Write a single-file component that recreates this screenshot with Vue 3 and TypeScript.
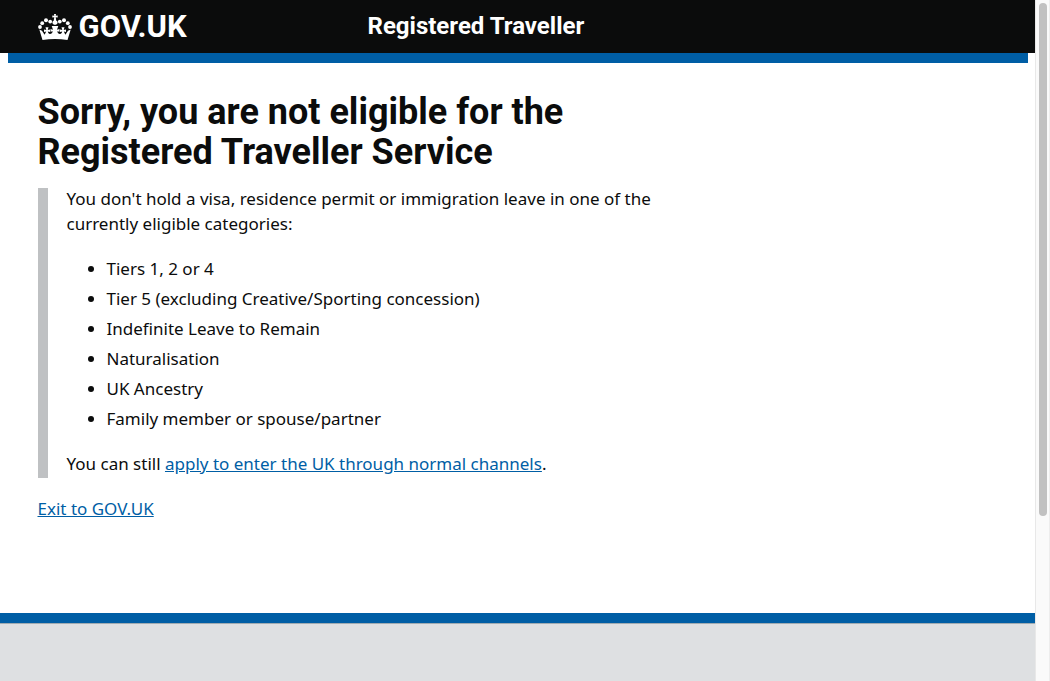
<script setup lang="ts">
const categories: string[] = [
  'Tiers 1, 2 or 4',
  'Tier 5 (excluding Creative/Sporting concession)',
  'Indefinite Leave to Remain',
  'Naturalisation',
  'UK Ancestry',
  'Family member or spouse/partner',
]
</script>

<template>
  <div class="screen">
    <div class="page">
      <header class="header">
        <div class="header-inner">
          <a class="logo" href="#" aria-label="GOV.UK">
            <svg class="crown" viewBox="1 1 34 26" aria-hidden="true">
              <g fill="#fff">
                <circle cx="3" cy="14" r="1.9" />
                <circle cx="5.2" cy="10.2" r="1.9" />
                <circle cx="9" cy="7.3" r="2" />
                <circle cx="13.2" cy="8.6" r="1.9" />
                <circle cx="22.8" cy="8.6" r="1.9" />
                <circle cx="27" cy="7.3" r="2" />
                <circle cx="30.8" cy="10.2" r="1.9" />
                <circle cx="33" cy="14" r="1.9" />
                <path d="M17 1h2l-.3 1.700 2-.3v2.200l-2-.3.6 3.400c.8.3 1.300 1 1.300 1.900 0 1-.7 1.800-1.600 2.200h-2c-.9-.4-1.600-1.200-1.600-2.200 0-.9.5-1.600 1.300-1.900l.6-3.400-2 .3V2.400l2 .3z" />
                <path d="M2.300 16.500 5 17.800l2.600 4 1.600-3.300-2.200.5v-2.600l2.300.5-.8-2.600h3l-.8 2.600 2.300-.5V19l-2.200-.5c.3 1.400 1 2.500 2.200 2.500 1.500 0 2.400-1 2.700-2.700l-2.200.4v-2.600l2.500.6-1.300-3.700h6.600L20 16.700l2.500-.6v2.600l-2.200-.4c.3 1.700 1.200 2.700 2.700 2.700 1.200 0 1.900-1.100 2.200-2.500L23 19v-2.600l2.300.5-.8-2.600h3l-.8 2.600 2.300-.5V19l-2.200-.5 1.600 3.300 2.600-4 2.700-1.300L30.500 27C22.500 25.700 13.500 25.700 5.500 27z" />
              </g>
            </svg>
            <span>GOV.UK</span>
          </a>
          <a class="service" href="#">Registered Traveller</a>
        </div>
      </header>
      <div class="accent"></div>

      <main class="content">
        <h1>Sorry, you are not eligible for the Registered Traveller Service</h1>
        <div class="panel">
          <p class="lead">You don't hold a visa, residence permit or immigration leave in one of the currently eligible categories:</p>
          <ul>
            <li v-for="category in categories" :key="category">{{ category }}</li>
          </ul>
          <p>You can still <a href="#">apply to enter the UK through normal channels</a>.</p>
        </div>
        <p class="exit"><a href="#">Exit to GOV.UK</a></p>
      </main>

      <footer class="footer"></footer>
    </div>
    <div class="scroll-track" aria-hidden="true"><div class="scroll-thumb"></div></div>
  </div>
</template>

<style>
body {
  margin: 0;
}
</style>

<style scoped>
.screen {
  display: flex;
  min-height: 100vh;
  background: #fff;
  color: #0b0c0c;
  font-family: "Noto Sans", "Open Sans", sans-serif;
  font-size: 17px;
  line-height: 25px;
}

.page {
  display: flex;
  flex: 1;
  flex-direction: column;
  min-width: 0;
}

.header {
  background: #0b0c0c;
}

.header-inner {
  display: grid;
  grid-template-columns: 330px 1fr;
  align-items: center;
  max-width: 960px;
  height: 53px;
  margin: 0 auto;
  padding: 0 30px;
}

.logo,
.service {
  color: #fff;
  font-family: Roboto, "Noto Sans", sans-serif;
  font-weight: 700;
  text-decoration: none;
}

.logo {
  display: flex;
  align-items: center;
  gap: 7px;
  font-size: 31px;
}

.crown {
  width: 34px;
  height: 26px;
}

.service {
  font-size: 24px;
}

.accent {
  box-sizing: border-box;
  width: 100%;
  max-width: 1020px;
  height: 10px;
  margin: 0 auto;
  background: #005ea5;
}

.content {
  box-sizing: border-box;
  width: 100%;
  max-width: 1020px;
  margin: 0 auto;
  padding: 29px 30px 92px;
}

h1 {
  max-width: 630px;
  margin: 0 0 16px;
  font-family: Roboto, "Noto Sans", sans-serif;
  font-size: 36px;
  font-weight: 700;
  line-height: 40px;
}

.panel {
  display: flow-root;
  box-sizing: border-box;
  max-width: 630px;
  padding: 0 0 2px 19px;
  border-left: 10px solid #bfc1c3;
}

p {
  margin: 0;
}

.lead {
  margin-top: -2px;
}

ul {
  margin: 20px 0;
  padding-left: 40px;
}

li {
  margin-bottom: 5px;
}

a {
  color: #005ea5;
}

.exit {
  margin-top: 18px;
}

.footer {
  flex: 1;
  border-top: 10px solid #005ea5;
  background: #dee0e2;
  box-shadow: inset 0 1px #a1acb2;
}

.scroll-track {
  box-sizing: border-box;
  width: 15px;
  padding: 3px 2px 0 3px;
  border-right: 1px solid #ededed;
  border-left: 1px solid #e8e8e8;
  background: #fafafa;
}

.scroll-thumb {
  height: 75.7%;
  border-radius: 4px;
  background: #c1c1c1;
}
</style>
